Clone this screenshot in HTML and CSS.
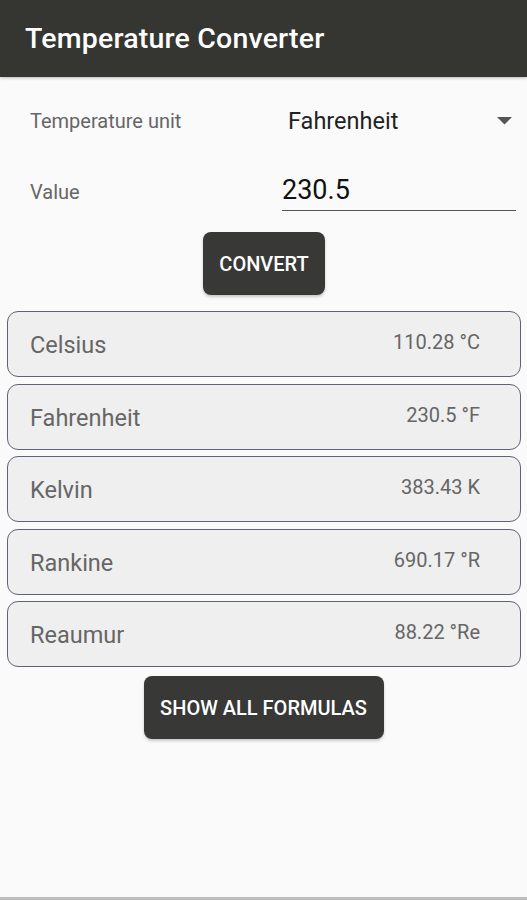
FILE: index.html
```html
<!DOCTYPE html>
<html>
<head>
<meta charset="utf-8">
<link rel="stylesheet" href="styles.css">
</head>
<body>
<div class="screen">
  <header class="appbar"><h1 class="title">Temperature Converter</h1></header>
  <main class="content">
    <div class="row row-unit">
      <span class="label">Temperature unit</span>
      <div class="spinner">
        <span class="spinner-text">Fahrenheit</span>
        <svg class="arrow" width="15" height="8" viewBox="0 0 15 8"><path d="M0 0 H15 L7.5 7.5 Z" fill="#555"/></svg>
      </div>
    </div>
    <div class="row row-value">
      <span class="label">Value</span>
      <div class="input">230.5</div>
    </div>
    <div class="btn-wrap"><button class="btn btn-convert">CONVERT</button></div>
    <div class="cards">
      <div class="card"><span class="unit">Celsius</span><span class="val">110.28 °C</span></div>
      <div class="card"><span class="unit">Fahrenheit</span><span class="val">230.5 °F</span></div>
      <div class="card"><span class="unit">Kelvin</span><span class="val">383.43 K</span></div>
      <div class="card"><span class="unit">Rankine</span><span class="val">690.17 °R</span></div>
      <div class="card"><span class="unit">Reaumur</span><span class="val">88.22 °Re</span></div>
    </div>
    <div class="btn-wrap btn-wrap-formulas"><button class="btn btn-formulas">SHOW ALL FORMULAS</button></div>
  </main>
</div>
</body>
</html>
```
FILE: styles.css
```css
* { box-sizing: border-box; }
html, body { margin: 0; padding: 0; }
body {
  background: #fafafa;
  font-family: Roboto, "Liberation Sans", sans-serif;
  width: 527px;
  height: 900px;
  overflow: hidden;
}
.screen {
  height: 900px;
  display: flex;
  flex-direction: column;
  border-bottom: 3px solid #bdbdbd;
}
.appbar {
  height: 77px;
  background: #353531;
  display: flex;
  align-items: center;
  padding-left: 25px;
  box-shadow: 0 1px 3px rgba(0,0,0,0.25);
}
.title {
  margin: 0;
  color: #ffffff;
  font-size: 28.5px;
  font-weight: 500;
  letter-spacing: 0.2px;
}
.content {
  flex: 1;
  display: flex;
  flex-direction: column;
}
.row {
  display: flex;
  align-items: center;
  padding-left: 30px;
}
.label {
  width: 252px;
  color: #666;
  font-size: 20px;
}
.row-unit {
  margin-top: 20px;
  height: 48px;
}
.spinner {
  flex: 1;
  display: flex;
  align-items: center;
  justify-content: space-between;
  padding-left: 6px;
  padding-right: 15px;
}
.spinner-text {
  font-size: 23.5px;
  color: #222;
}
.arrow { display: block; }
.row-value {
  margin-top: 14px;
  height: 52px;
  align-items: flex-start;
}
.row-value .label {
  margin-top: 21px;
}
.input {
  width: 234px;
  height: 52px;
  font-size: 27px;
  line-height: 32px;
  color: #111;
  padding-top: 15px;
  border-bottom: 1.5px solid #555;
}
.btn-wrap {
  display: flex;
  justify-content: center;
}
.btn {
  background: #383836;
  color: #fff;
  border: none;
  border-radius: 8px;
  font-family: Roboto, "Liberation Sans", sans-serif;
  font-weight: 500;
  font-size: 20px;
  height: 63px;
  box-shadow: 0 2px 3px rgba(0,0,0,0.2);
}
.btn-convert {
  margin-top: 21px;
  width: 122px;
  margin-left: 1px;
}
.cards {
  margin-top: 16px;
  padding: 0 6px 0 7px;
  display: flex;
  flex-direction: column;
  gap: 6.5px;
}
.card {
  height: 66px;
  background: #efefef;
  border: 1.5px solid #5f6474;
  border-radius: 11px;
  display: flex;
  align-items: center;
  justify-content: space-between;
  padding: 0 40px 0 22px;
}
.unit {
  font-size: 23.5px;
  color: #666;
  position: relative;
  top: 1px;
}
.val {
  font-size: 20px;
  color: #666;
  position: relative;
  top: -2px;
}
.btn-wrap-formulas { margin-top: 9px; }
.btn-formulas {
  width: 240px;
}
```
